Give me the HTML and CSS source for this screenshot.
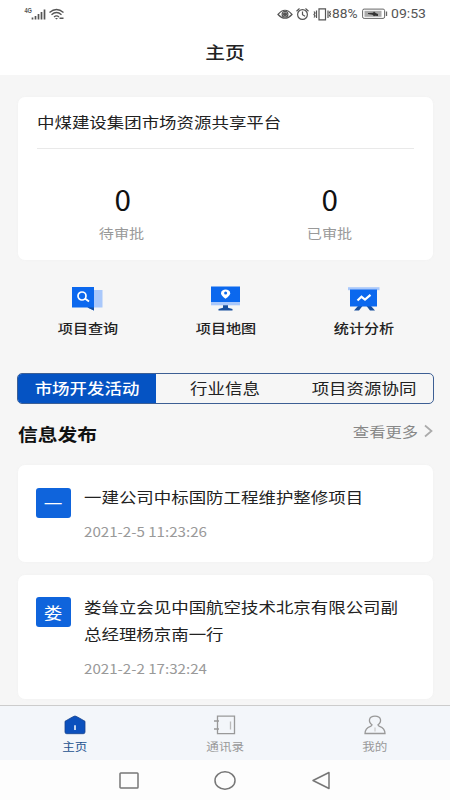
FILE: index.html
```html
<!DOCTYPE html>
<html lang="zh-CN">
<head>
<meta charset="utf-8">
<title>主页</title>
<link rel="stylesheet" href="styles.css">
</head>
<body>
<header class="top">
  <div class="status">
    <svg class="signal" width="42" height="14" viewBox="0 0 42 14">
      <text x="0.500" y="6" class="net" textLength="7.500" lengthAdjust="spacingAndGlyphs">4G</text>
      <path d="M8.500 10.500v2M11.500 9v3.500M14.500 7v5.500M17.500 5v7.500M20.500 2.500v10" stroke="#555" stroke-width="1.7" fill="none"/>
      <path d="M25.500 5.500Q32.500-.5 39.500 5.500M27.500 7.700Q32.500 3.300 37.500 7.700M30 10Q32.500 7.800 35 10" stroke="#555" stroke-width="1.3" fill="none"/>
      <path d="M31 11h3l-1.500 1.500zM35.500 10.500h4v1.500h-4z" fill="#555"/>
    </svg>
    <div class="status-right">
      <svg class="status-icons" width="56" height="14" viewBox="0 0 56 14" fill="none" stroke="#555" stroke-width="1.2">
        <path d="M1 7.500Q8-1 15 7.500Q8 15 1 7.500z"/><circle cx="8" cy="7.300" r="2.900"/><circle cx="8" cy="7.300" r="1.500" fill="#555"/>
        <circle cx="25.500" cy="7.500" r="4.900"/><path d="M25.500 4.500v3.200l2.600 1.500M19.500 4.200L22.500 1.500M31.500 4.200L28.500 1.500"/>
        <path d="M42 1.800h6.500v11H42zM39.500 3.500v7.500M37 4.500l1 1.500-1 1.500 1 1.500-1 1.500M51 3.500v7.500M53.500 4l-1 1.500 1 1.500-1 1.500 1 1.500"/>
      </svg>
      <span class="status-text pct"><span>88%</span></span>
      <svg class="battery" width="26" height="12" viewBox="0 0 26 12">
        <rect x=".6" y="1.100" width="22" height="9.300" rx="1.500" fill="#fff" stroke="#666"/>
        <rect x="2.500" y="2.800" width="17" height="6" fill="#aaa"/>
        <path d="M6 5l5-.2 1-1.300 2 1.700 2 .8v2l-3-.3-1 .6-1.500-1.600L6 6z" fill="#333"/>
        <path d="M24.500 3.500v4.500" stroke="#666" stroke-width="1.300"/>
      </svg>
      <span class="status-text time"><span>09:53</span></span>
    </div>
  </div>
  <h1><span class="wide">主页</span></h1>
</header>

<main>
  <section class="card summary">
    <h2><span class="wide left">中煤建设集团市场资源共享平台</span></h2>
    <div class="counts">
      <div class="count"><b>0</b><span class="wide">待审批</span></div>
      <div class="count"><b>0</b><span class="wide">已审批</span></div>
    </div>
  </section>

  <section class="shortcuts">
    <a class="shortcut">
      <svg width="34" height="26" viewBox="0 0 34 26">
        <path d="M22 4h9.500v17.500H22z" fill="#a9c8fb"/>
        <path d="M1 1h22v23.500L16.500 21.500H1z" fill="#0b68ee"/>
        <path d="M16.500 21.500H23v3z" fill="#174f9e"/>
        <circle cx="11" cy="10" r="4" fill="none" stroke="#fff" stroke-width="1.700"/>
        <path d="M14 12.500l4 3" stroke="#fff" stroke-width="1.900"/>
      </svg>
      <span class="wide">项目查询</span>
    </a>
    <a class="shortcut">
      <svg width="34" height="26" viewBox="0 0 34 26">
        <path d="M2 15h29v4.300H2z" fill="#a9c8fb"/>
        <path d="M2 .5h29V16H2z" fill="#0b68ee"/>
        <path d="M14 19.300h5v2.500l4.500 1.200v1.500H9.500V23l4.500-1.200z" fill="#174f9e"/>
        <path d="M16.500 12.800Q12 9.300 12 7.200C12 2.300 21.200 2.300 21.200 7.200Q21.200 9.300 16.500 12.800z" fill="#fff"/>
        <circle cx="16.600" cy="7" r="1.500" fill="#0b68ee"/>
      </svg>
      <span class="wide">项目地图</span>
    </a>
    <a class="shortcut">
      <svg width="34" height="26" viewBox="0 0 34 26">
        <path d="M11 20h4.500l-3.500 4.500H7zM19.500 20H24l4 4.500h-5z" fill="#174f9e"/>
        <path d="M1 1.200h31.500v3H1z" fill="#a9c8fb"/>
        <path d="M3 3.500h27V20.500H3z" fill="#0b68ee"/>
        <path d="M10.500 14.500l4-3.700 3.500 2.700 5.500-4.700" fill="none" stroke="#fff" stroke-width="2.200"/>
      </svg>
      <span class="wide">统计分析</span>
    </a>
  </section>

  <nav class="tabs">
    <a class="tab active"><span class="wide">市场开发活动</span></a>
    <a class="tab"><span class="wide">行业信息</span></a>
    <a class="tab"><span class="wide">项目资源协同</span></a>
  </nav>

  <div class="section-head">
    <h3><span class="wide left">信息发布</span></h3>
    <a class="more"><span class="wide right">查看更多</span>
      <svg width="9" height="14" viewBox="0 0 9 14"><path d="M1 1.500l6.500 5.500L1 12.500" fill="none" stroke="#aaa" stroke-width="1.700"/></svg>
    </a>
  </div>

  <article class="card item first">
    <div class="avatar"><span class="wide">一</span></div>
    <div class="body">
      <p class="wide left">一建公司中标国防工程维护整修项目</p>
      <time class="wide left">2021-2-5 11:23:26</time>
    </div>
  </article>
  <article class="card item second">
    <div class="avatar"><span class="wide">娄</span></div>
    <div class="body">
      <p class="wide left">娄耸立会见中国航空技术北京有限公司副总经理杨京南一行</p>
      <time class="wide left">2021-2-2 17:32:24</time>
    </div>
  </article>
</main>

<nav class="bottom">
  <a class="dock current">
    <svg width="24" height="20" viewBox="0 0 24 20"><path d="M12 1Q13 1 22 6.300V17q0 1.700-1.700 1.700H3.700Q2 18.700 2 17V6.300Q11 1 12 1z" fill="#0b50bd" stroke="#16428d" stroke-width=".8"/><path d="M12 10.300v4.700" stroke="#fff" stroke-width="1.500"/></svg>
    <span class="wide">主页</span>
  </a>
  <a class="dock">
    <svg width="24" height="20" viewBox="0 0 24 20" fill="none" stroke="#999" stroke-width="1.300"><path d="M4.500 1.200h17v17.500h-17zM1 6h5M1 14h5"/><path d="M17.500 6.500v8" stroke="#bbb"/></svg>
    <span class="wide">通讯录</span>
  </a>
  <a class="dock">
    <svg width="24" height="20" viewBox="0 0 24 20" fill="none" stroke="#999" stroke-width="1.300"><path d="M9 9.800C5 7 5.500 1.200 12 1.200S19 7 15 9.800q0 1 1.500 1.500 5.500 2 5.500 7.200H2q0-5.200 5.500-7.200Q9 10.800 9 9.800z"/><path d="M12 12.500v4" stroke="#ccc"/></svg>
    <span class="wide">我的</span>
  </a>
</nav>
<footer class="system">
  <svg width="20" height="17" viewBox="0 0 20 17"><rect x="1" y="1" width="18" height="15" rx=".8"/></svg>
  <svg width="22" height="19" viewBox="0 0 22 19"><ellipse cx="11" cy="9.500" rx="10" ry="8.700"/></svg>
  <svg width="20" height="19" viewBox="0 0 20 19"><path d="M18 1.500v16L2 9.500z" stroke-linejoin="round"/></svg>
</footer>
</body>
</html>
```
FILE: styles.css
```css
* { box-sizing: border-box; margin: 0; padding: 0; }
body {
  width: 450px;
  height: 800px;
  overflow: hidden;
  display: flex;
  flex-direction: column;
  background: #f6f6f6;
  color: #222;
  font-family: "Noto Sans CJK SC", "Noto Sans", sans-serif;
}
svg { display: block; flex: none; }

/* Glyphs are drawn wider than tall throughout the interface. */
.wide { display: inline-block; white-space: nowrap; transform: scaleX(1.163); }
.left { transform-origin: 0 50%; }
.right { transform-origin: 100% 50%; }

.top { height: 75px; background: #fff; flex: none; }
.status { height: 28px; padding: 7px 24px 0 24px; display: flex; justify-content: space-between; }
.net { font: bold 7px "Liberation Sans", sans-serif; fill: #555; }
.status-right { display: flex; align-items: center; height: 14px; }
.status-text { font: 13px/14px Roboto, sans-serif; color: #555; }
.status-text span { display: inline-block; transform-origin: 0 50%; }
.status-icons { margin-right: -1px; }
.pct { width: 30px; }
.pct span { transform: scaleX(1.06); }
.battery { margin-right: 3px; }
.time { width: 35px; }
.time span { transform: scaleX(1.08); }
h1 { font-size: 17px; line-height: 24px; font-weight: 500; text-align: center; padding-top: 12px; }

main { flex: 1; min-height: 0; padding: 22px 17px 0 18px; }
.card { background: #fff; border-radius: 7px; box-shadow: 0 0 3px #f1f1f1; }
.summary { height: 163px; padding: 0 19px; }
h2 { height: 52px; border-bottom: 1px solid #e9e9e9; font-size: 15px; line-height: 49px; font-weight: 400; }
.counts { display: grid; grid-template-columns: 1fr 1fr; margin: 0 -19px; padding-top: 32px; }
.count { display: flex; flex-direction: column; align-items: center; }
.count b { font-size: 28px; line-height: 36px; font-weight: 400; color: #111; transform: translateX(1px) scaleX(1.06); }
.count span { font-size: 13px; line-height: 20px; margin-top: 6px; color: #999; }

.shortcuts { display: grid; grid-template-columns: repeat(3, 1fr); margin: 26px 0 0 1px; }
.shortcut { display: flex; flex-direction: column; align-items: center; }
.shortcut span { font-size: 13px; line-height: 20px; margin-top: 6px; font-weight: 500; }

.tabs { height: 31px; margin: 35px -1px 0 -1px; display: grid; grid-template-columns: repeat(3, 1fr); border: 1px solid #3d5f94; border-radius: 5px; overflow: hidden; }
.tab { font-size: 15px; line-height: 27px; text-align: center; }
.active { background: #0553c3; color: #fff; font-weight: 500; }

.section-head { display: flex; justify-content: space-between; align-items: flex-start; height: 61px; padding-top: 16px; }
h3 { font-size: 17px; line-height: 28px; font-weight: 700; color: #111; }
.more { display: flex; align-items: center; gap: 6px; height: 22px; font-size: 14px; line-height: 22px; color: #888; }

.item { display: flex; padding: 23px 18px 0; }
.first { height: 97px; }
.second { height: 124px; margin-top: 13px; padding-top: 22px; }
.avatar { width: 35px; height: 30px; flex: none; border-radius: 3px; background: #0f64dc; color: #fff; text-align: center; font-size: 16px; line-height: 31px; }
.body { width: 275px; margin-left: 13px; margin-top: -4px; }
.second .body { margin-top: -3px; }
.body p { font-size: 15px; line-height: 26px; width: 275px; white-space: normal; }
.second p { line-height: 26.500px; }
.body time { display: block; font-size: 13px; line-height: 20px; margin-top: 12px; color: #999; }

.bottom { height: 55px; flex: none; background: #f3f6fa; border-top: 1px solid #ccc; display: grid; grid-template-columns: repeat(3, 1fr); }
.dock { display: flex; flex-direction: column; align-items: center; padding-top: 9px; color: #999; }
.dock span { font-size: 10.800px; line-height: 16px; margin-top: 3px; }
.current { color: #24528f; }
.system { height: 40px; flex: none; background: #fdfdfd; display: flex; justify-content: center; align-items: center; gap: 75px; }
.system svg { fill: none; stroke: #777; stroke-width: 1.500; }
```
